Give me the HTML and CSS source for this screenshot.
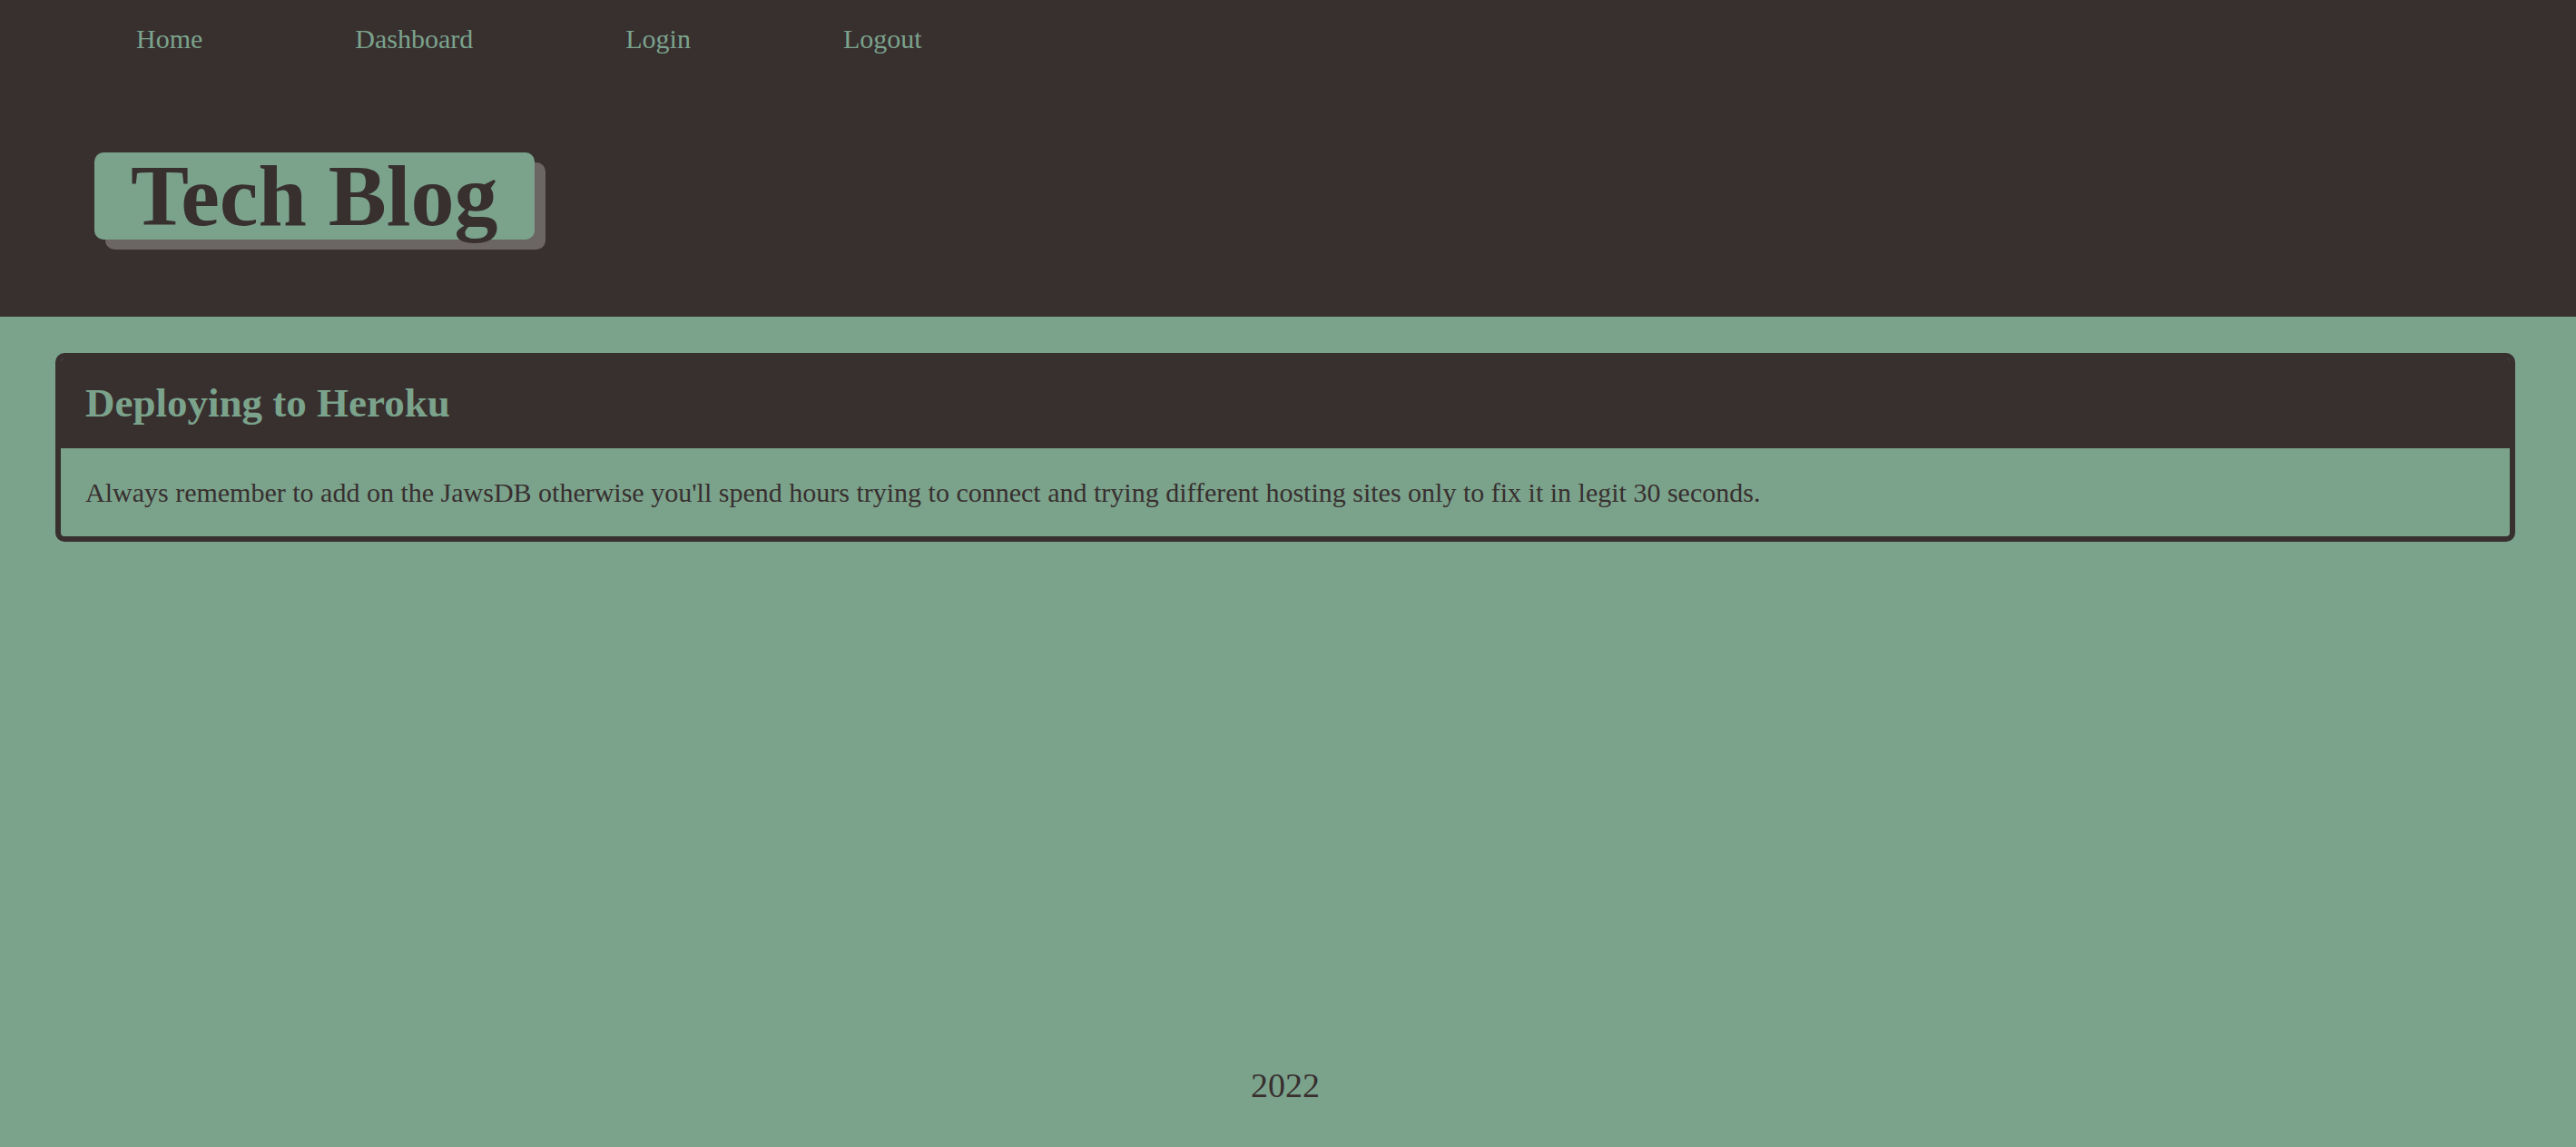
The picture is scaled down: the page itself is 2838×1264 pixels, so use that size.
FILE: index.html
```html
<!DOCTYPE html>
<html lang="en">
<head>
<meta charset="utf-8">
<title>Tech Blog</title>
<link rel="stylesheet" href="styles.css">
</head>
<body>
<header class="site-header">
  <nav class="nav">
    <a class="nav-link" href="#">Home</a>
    <a class="nav-link" href="#">Dashboard</a>
    <a class="nav-link" href="#">Login</a>
    <a class="nav-link" href="#">Logout</a>
  </nav>
  <div class="brand-wrap">
    <h1 class="brand">Tech Blog</h1>
  </div>
</header>
<main class="content">
  <article class="post">
    <h2 class="post-title">Deploying to Heroku</h2>
    <p class="post-body">Always remember to add on the JawsDB otherwise you'll spend hours trying to connect and trying different hosting sites only to fix it in legit 30 seconds.</p>
  </article>
</main>
<footer class="site-footer">2022</footer>
</body>
</html>
```

FILE: styles.css
```css
html, body {
  margin: 0;
  padding: 0;
}

body {
  background: #7ba38c;
  color: #382f2f;
  font-family: "Liberation Serif", "Times New Roman", serif;
  min-height: 100vh;
  display: flex;
  flex-direction: column;
}

.site-header {
  background: #382f2f;
  height: 349px;
  box-sizing: border-box;
  padding-top: 26px;
}

.nav {
  display: flex;
  gap: 168px;
  padding-left: 150px;
}

.nav-link {
  color: #7ba38c;
  text-decoration: none;
  font-size: 30px;
  line-height: 34px;
}

.brand-wrap {
  margin-top: 108px;
  padding-left: 104px;
}

.brand {
  display: inline-block;
  margin: 0;
  padding: 0 40px;
  font-size: 96px;
  line-height: 96px;
  font-weight: bold;
  background: #7ba38c;
  color: #382f2f;
  border-radius: 10px;
  box-shadow: 12px 11px 0 #6b6563;
}

.content {
  flex: 1;
  padding: 40px 67px 0 61px;
}

.post {
  border: 6px solid #382f2f;
  border-radius: 10px;
  overflow: hidden;
}

.post-title {
  margin: 0;
  background: #382f2f;
  color: #7ba38c;
  font-size: 45px;
  font-weight: bold;
  padding: 23px 27px 24px;
}

.post-body {
  margin: 0;
  font-size: 30px;
  padding: 32px 27px 31px;
}

.site-footer {
  text-align: center;
  font-size: 38px;
  padding: 0 6px 46px 0;
}
```
